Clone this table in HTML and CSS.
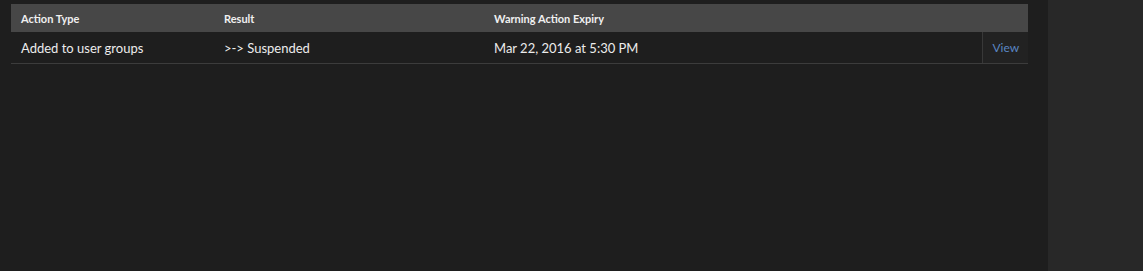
FILE: index.html
```html
<!DOCTYPE html>
<html lang="en">
<head>
    <meta charset="UTF-8">
    <meta name="viewport" content="width=device-width, initial-scale=1.0">
    <title>Warning Actions</title>
    <link rel="stylesheet" href="styles.css">
</head>
<body>
    <div class="layout">
        <!-- Contenu principal -->
        <div class="content">
            <table class="actions">
                <thead>
                    <tr>
                        <th class="col-type">Action Type</th>
                        <th class="col-result">Result</th>
                        <th class="col-expiry">Warning Action Expiry</th>
                        <th class="col-view"></th>
                    </tr>
                </thead>
                <tbody>
                    <tr>
                        <td>Added to user groups</td>
                        <td>&gt;-&gt; Suspended</td>
                        <td>Mar 22, 2016 at 5:30 PM</td>
                        <td class="view-cell"><a href="#">View</a></td>
                    </tr>
                </tbody>
            </table>
        </div>

        <!-- Barre latérale -->
        <div class="sidebar"></div>
    </div>
</body>
</html>
```

FILE: styles.css
```css
body {
    font-family: Lato, "Open Sans", sans-serif;
    margin: 0;
    padding: 0;
    background-color: #1e1e1e;
    color: #e8e8e8;
}

.layout {
    display: flex;
    height: 100vh;
}

.content {
    width: 1048px;
    padding: 4px 20px 0 11px;
    box-sizing: border-box;
}

.sidebar {
    flex: 1;
    background-color: #282828;
}

.actions {
    width: 100%;
    border-collapse: collapse;
    table-layout: fixed;
}

.actions th {
    background-color: #474747;
    height: 28px;
    padding: 0 10px;
    text-align: left;
    font-size: 11px;
    font-weight: bold;
    color: #f0f0f0;
}

.actions td {
    height: 31px;
    padding: 0 10px;
    font-size: 13px;
    color: #ececec;
    border-bottom: 1px solid #3c3c3c;
    white-space: nowrap;
}

/* Largeurs des colonnes */
.col-type { width: 183px; }
.col-result { width: 250px; }
.col-view { width: 26px; }

.actions td.view-cell {
    background-color: #222222;
    border-left: 1px solid #383838;
    padding: 0 0 0 10px;
    font-size: 12px;
}

.view-cell a {
    color: #5a86c2;
    text-decoration: none;
}
```
